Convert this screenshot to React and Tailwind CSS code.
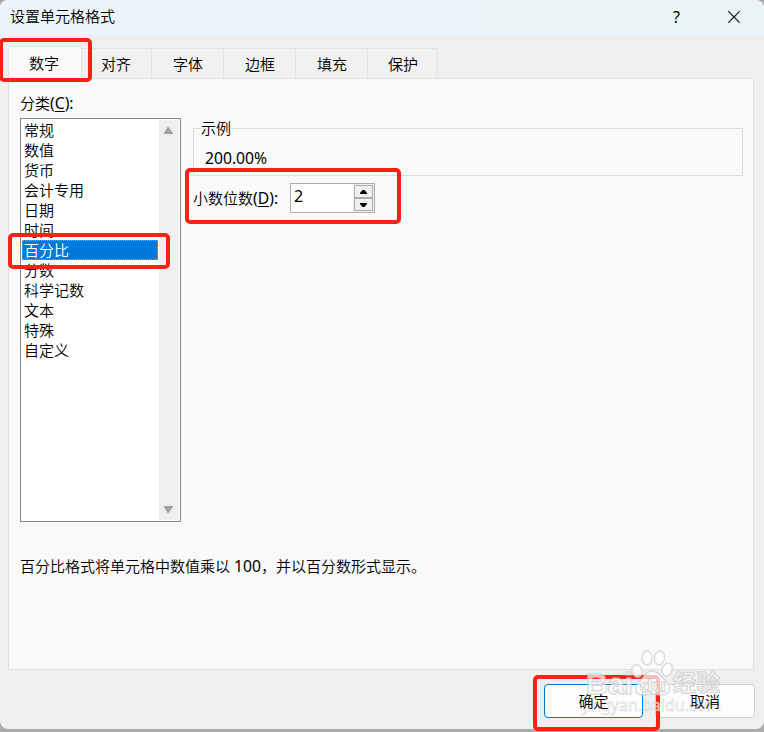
import React from "react";

const tabs = [
  { label: "对齐", cls: "w-[70px] pl-[19px]" },
  { label: "字体", cls: "w-[72px] pl-[21px]" },
  { label: "边框", cls: "w-[72px] pl-[21px]" },
  { label: "填充", cls: "w-[72px] pl-[21px]" },
  { label: "保护", cls: "w-[69px] pl-[20px]" },
];

const categories = ["常规", "数值", "货币", "会计专用", "日期", "时间", "百分比", "分数", "科学记数", "文本", "特殊", "自定义"];

function AccessKey({ letter }) {
  return (
    <span className="text-[15.7px] font-normal">
      (<u className="underline-offset-2">{letter}</u>):
    </span>
  );
}

function TitleBar() {
  return (
    <header className="flex h-9 shrink-0 items-center bg-gradient-to-r from-[#edf4f9] via-[#e9f4f8] to-[#eaf4f7] pl-[10px]">
      <h1 className="-mt-[5px] flex-1 leading-5">设置单元格格式</h1>
      <span className="-mt-[3px] mr-[47px] w-[9px] text-center text-[16px] font-normal">?</span>
      <svg className="-mt-[2px] mr-[24px]" width="12" height="12" viewBox="0 0 12 12" fill="none" stroke="#111" strokeWidth="1.2">
        <path d="M0.3 0.3 11.7 11.7M11.7 0.3 0.3 11.7" />
      </svg>
    </header>
  );
}

function CategoryList() {
  return (
    <div className="flex h-[404px] w-[161px] border border-[#828790] bg-white p-px">
      <ul className="w-[136px] text-[15px] leading-5">
        {categories.map((c) => (
          <li
            key={c}
            className={
              c === "百分比"
                ? "h-5 border border-dotted border-[#ff8728] bg-[#0078d7] pl-px leading-[18px] text-white"
                : "h-5 pl-[2px]"
            }
          >
            {c}
          </li>
        ))}
      </ul>
      <div className="ml-px flex w-5 flex-col items-center justify-between bg-[#efefef] pt-[6px] pb-[6px] pr-px">
        <svg width="11" height="9" viewBox="0 0 11 9" fill="#a3a3a3"><path d="M4.5 1h1L10 7v1H1V7z" /></svg>
        <svg width="11" height="9" viewBox="0 0 11 9" fill="#a3a3a3"><path d="M1 1h9v1L5.5 8h-1L1 2z" /></svg>
      </div>
    </div>
  );
}

function Spinner() {
  return (
    <div className="flex h-[30px] w-[85px] border border-[#abadb3] bg-white">
      <span className="flex-1 pl-[3px] text-[16px] leading-[25px] font-normal">2</span>
      <div className="flex w-[21px] flex-col bg-[#f0f0f0] py-px pl-px pr-px">
        <div className="flex h-[13px] items-center justify-center border border-[#acacac] bg-[#f0f0f0]">
          <svg width="7" height="4" viewBox="0 0 7 4"><path d="M0 4h7V3L4.5 0h-2L0 3z" /></svg>
        </div>
        <div className="flex h-[13px] items-center justify-center border border-[#acacac] bg-[#f0f0f0]">
          <svg width="7" height="4" viewBox="0 0 7 4"><path d="M0 0h7v1L4.5 4h-2L0 1z" /></svg>
        </div>
      </div>
    </div>
  );
}

function Watermark() {
  return (
    <svg className="pointer-events-none absolute left-[580px] top-[645px]" width="150" height="80" viewBox="0 0 150 80">
      <g fill="#fff" fillOpacity="0.7" stroke="#c8c8c8" strokeOpacity="0.65" strokeWidth="1.4">
        <ellipse cx="67" cy="13" rx="5" ry="7" />
        <ellipse cx="79.5" cy="13" rx="5" ry="7" transform="rotate(8 79.5 13)" />
        <ellipse cx="57" cy="26" rx="5" ry="6.5" transform="rotate(-18 57 26)" />
        <ellipse cx="87" cy="24.5" rx="5" ry="6.5" transform="rotate(20 87 24.5)" />
        <path d="M72 26c-6 0-8 6-12 10-7 6-5 14 3 14 4 0 5-1 9-1s5 1 10 1c8 0 10-8 4-14-5-4-8-10-14-10z" />
        <text x="6" y="49" textLength="47" lengthAdjust="spacingAndGlyphs" fontSize="30" fontWeight="700" fontFamily="Liberation Sans, sans-serif">Bai</text>
        <text x="60" y="47" textLength="26" lengthAdjust="spacingAndGlyphs" fontSize="19" fontWeight="700" fontFamily="Liberation Sans, sans-serif">du</text>
        <text x="93" y="46" textLength="47" fontSize="23" fontWeight="700" fontFamily="Noto Sans CJK SC, sans-serif">经验</text>
      </g>
      <text x="3" y="66" textLength="138" lengthAdjust="spacingAndGlyphs" fontSize="16" fontWeight="400" fontFamily="Noto Sans, sans-serif" fill="#fff" fillOpacity="0.7" stroke="#c8c8c8" strokeOpacity="0.55" strokeWidth="0.8">jingyan.baidu.com</text>
    </svg>
  );
}

export default function App() {
  return (
    <div className="relative h-[732px] w-[764px] overflow-hidden bg-[#aaa] font-['Noto_Sans','Noto_Sans_CJK_SC',sans-serif] text-[15px] font-[350] text-black">
      <main className="flex h-[729px] flex-col overflow-hidden rounded-[8px] bg-[#efefef]">
        <TitleBar />
        <nav className="flex h-[42px] shrink-0 items-end pl-2 leading-5">
          <div className="relative -mb-px flex h-[33px] w-[74px] items-center border border-b-0 border-[#e3e3e3] bg-[#f9f9f9] pl-5">数字</div>
          {tabs.map((t) => (
            <div key={t.label} className={`flex h-[30px] items-center border-t border-r border-[#e3e3e3] bg-[#f1f1f1] pt-px ${t.cls}`}>
              {t.label}
            </div>
          ))}
        </nav>
        <section className="ml-2 flex h-[592px] w-[746px] shrink-0 flex-col border border-[#e0e0e0] bg-[#f9f9f9] pl-[11px]">
          <div className="flex">
            <div>
              <p className="mt-[14px] mb-[5px] h-5 leading-5">分类<AccessKey letter="C" /></p>
              <CategoryList />
            </div>
            <div className="ml-3 pt-[39px]">
              <fieldset className="h-[58px] w-[550px] border border-[#dcdcdc] pl-[6px]">
                <legend className="h-5 px-px leading-5">示例</legend>
                <p className="pl-[5px] pt-[10px] text-[15.7px] leading-5 font-normal">200.00%</p>
              </fieldset>
              <div className="mt-[7px] flex h-[30px] items-center">
                <span className="w-[97px] pt-[2px]">小数位数<AccessKey letter="D" /></span>
                <Spinner />
              </div>
            </div>
          </div>
          <p className="mt-[34px] leading-5">百分比格式将单元格中数值乘以<span className="text-[15.7px] font-normal"> 100</span>，并以百分数形式显示。</p>
        </section>
        <footer className="mt-[14px] flex h-[34px] justify-end gap-[12px] pr-[9px]">
          <button className="w-[99px] rounded-[4px] border border-[#0078d4] bg-[#fdfdfd]"><span className="relative z-20">确定</span></button>
          <button className="w-[100px] rounded-[4px] border border-[#d0d0d0] bg-[#fdfdfd]"><span className="relative z-20">取消</span></button>
        </footer>
      </main>
      <div className="absolute left-[-1px] top-[38px] h-[44px] w-[93px] rounded-[5px] border-4 border-[#fe2014]" />
      <div className="absolute left-[185px] top-[168px] h-[56px] w-[216px] rounded-[5px] border-4 border-[#fe2014]" />
      <div className="absolute left-[8px] top-[233px] h-[36px] w-[162px] rounded-[5px] border-4 border-[#fe2014]" />
      <div className="absolute left-[533px] top-[675px] h-[56px] w-[127px] rounded-[5px] border-4 border-[#fe2014]" />
      <Watermark />
    </div>
  );
}
